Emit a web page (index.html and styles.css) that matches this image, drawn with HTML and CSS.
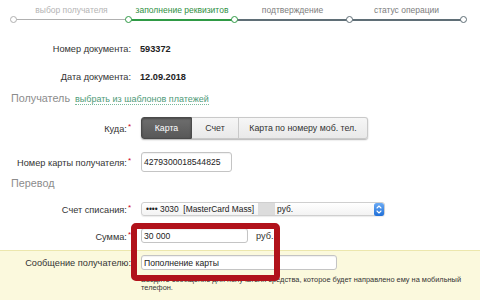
FILE: index.html
```html
<!DOCTYPE html>
<html lang="ru">
<head>
<meta charset="utf-8">
<link rel="stylesheet" href="styles.css">
</head>
<body>
<div class="page">
  <div class="steps">
    <div class="step done">
      <div class="step-label">выбор получателя</div>
      <div class="step-line"></div>
    </div>
    <div class="step current">
      <div class="step-label">заполнение реквизитов</div>
      <div class="step-line"></div>
    </div>
    <div class="step todo">
      <div class="step-label">подтверждение</div>
      <div class="step-line"></div>
    </div>
    <div class="step todo last">
      <div class="step-label">статус операции</div>
      <div class="step-line"></div>
    </div>
  </div>

  <div class="row row-doc first">
    <div class="label">Номер документа:</div>
    <div class="field value">593372</div>
  </div>
  <div class="row row-doc second">
    <div class="label">Дата документа:</div>
    <div class="field value">12.09.2018</div>
  </div>

  <div class="section section-recipient">
    <span class="section-title">Получатель</span>
    <span class="section-link">выбрать из шаблонов платежей</span>
  </div>

  <div class="row row-where">
    <div class="label">Куда:<span class="req">*</span></div>
    <div class="field">
      <div class="segmented">
        <span class="seg active">Карта</span>
        <span class="seg seg-acc">Счет</span>
        <span class="seg seg-phone">Карта по номеру моб. тел.</span>
      </div>
    </div>
  </div>

  <div class="row row-card">
    <div class="label">Номер карты получателя:<span class="req">*</span></div>
    <div class="field">
      <div class="input input-card">4279300018544825</div>
    </div>
  </div>

  <div class="section section-transfer">
    <span class="section-title">Перевод</span>
  </div>

  <div class="row row-account">
    <div class="label">Счет списания:<span class="req">*</span></div>
    <div class="field">
      <div class="select">
        <span class="select-text">•••• 3030&nbsp; [MasterCard Mass]</span>
        <span class="select-hidden"></span>
        <span class="select-cur">руб.</span>
        <span class="select-arrows">
          <svg width="10" height="13" viewBox="0 0 10 13">
            <defs>
              <linearGradient id="bg" x1="0" y1="0" x2="0" y2="1">
                <stop offset="0" stop-color="#6aaaf5"/>
                <stop offset="1" stop-color="#1f6fd8"/>
              </linearGradient>
            </defs>
            <rect x="0" y="0" width="10" height="13" rx="2.5" fill="url(#bg)"/>
            <path d="M3 5 L5 3 L7 5" fill="none" stroke="#fff" stroke-width="1.1" stroke-linecap="round" stroke-linejoin="round"/>
            <path d="M3 8 L5 10 L7 8" fill="none" stroke="#fff" stroke-width="1.1" stroke-linecap="round" stroke-linejoin="round"/>
          </svg>
        </span>
      </div>
    </div>
  </div>

  <div class="row row-sum">
    <div class="label">Сумма:<span class="req">*</span></div>
    <div class="field field-inline">
      <div class="input input-sum">30 000</div>
      <span class="unit">руб.</span>
    </div>
  </div>

  <div class="band">
    <div class="row row-message">
      <div class="label">Сообщение получателю:</div>
      <div class="field">
        <div class="input input-message">Пополнение карты</div>
      </div>
    </div>
    <div class="help">Введите сообщение для получателя средства, которое будет направлено ему на мобильный телефон.</div>
  </div>

  <div class="highlight"></div>
</div>
</body>
</html>
```

FILE: styles.css
```css
html, body {
  margin: 0;
  padding: 0;
  background: #ffffff;
}

body {
  font-family: "Liberation Sans", Arial, sans-serif;
  font-size: 9.2px;
  color: #333333;
  width: 480px;
  height: 300px;
  overflow: hidden;
}

.page {
  position: relative;
  width: 480px;
  height: 300px;
}

/* ---------- steps ---------- */
.steps {
  display: grid;
  grid-template-columns: 115px 106px 115px 113px;
  margin-left: 14px;
  padding-top: 4px;
}

.step-label {
  height: 12px;
  line-height: 12px;
  font-size: 8.5px;
  text-align: center;
  white-space: nowrap;
}

.step-line {
  position: relative;
  margin-top: 3px;
  height: 0;
  border-top: 2px solid #5f6e76;
}

.step-line::before {
  content: "";
  position: absolute;
  left: -4px;
  top: -5px;
  width: 5px;
  height: 5px;
  border-radius: 50%;
  border: 1.5px solid #5f6e76;
  background: #ffffff;
  z-index: 1;
}

.step.last .step-line::after {
  content: "";
  position: absolute;
  right: -4px;
  top: -5px;
  width: 5px;
  height: 5px;
  border-radius: 50%;
  border: 1.5px solid #5f6e76;
  background: #ffffff;
  z-index: 1;
}

.step.done .step-label { color: #b4b4b4; }
.step.done .step-line { border-top: 1.5px solid #b0b0b0; }
.step.done .step-line::before { border-color: #b0b0b0; top: -4.5px; }

.step.current .step-label { color: #2f8f3f; }
.step.current .step-line { border-top-color: #2f9a45; }
.step.current .step-line::before { border-color: #2f9a45; }

.step.todo .step-label { color: #7d7d7d; }
.step.todo .step-line::before { border-color: #2f9a45; }
.step.todo.last .step-line::before { border-color: #5f6e76; }

/* ---------- rows ---------- */
.row {
  display: flex;
  align-items: center;
}

.label {
  width: 131px;
  flex: 0 0 131px;
  text-align: right;
  white-space: nowrap;
  color: #333333;
}

.req {
  color: #d0021b;
  font-size: 8px;
  vertical-align: 3px;
  margin-left: 1px;
}

.field {
  margin-left: 10px;
  display: flex;
  align-items: center;
}

.value {
  font-weight: bold;
  color: #222222;
  margin-left: 9px;
}

.row-doc { height: 16px; }
.row-doc.first { margin-top: 20px; }
.row-doc.second { margin-top: 12px; }

/* ---------- sections ---------- */
.section {
  display: flex;
  align-items: baseline;
  gap: 5px;
  padding-left: 11px;
  height: 14px;
}

.section-title {
  font-size: 10.8px;
  color: #8c8c8c;
}

.section-link {
  font-size: 9px;
  color: #4e9a77;
  border-bottom: 1px dotted #7ab89a;
  line-height: 10px;
}

.section-recipient { margin-top: 7px; }
.section-transfer { margin-top: 5px; }

/* ---------- segmented ---------- */
.row-where { margin-top: 11px; height: 22px; }

.segmented {
  display: flex;
  height: 22px;
  border-radius: 3px;
  box-shadow: 0 1px 1.5px rgba(0, 0, 0, 0.3);
}

.seg {
  display: flex;
  align-items: center;
  justify-content: center;
  height: 20px;
  border: 1px solid #c9c9c9;
  border-left: none;
  background: linear-gradient(#f6f6f6, #e9e9e9);
  color: #333333;
  font-size: 8.8px;
}

.seg.active {
  width: 49px;
  border: 1px solid #4a4a4a;
  border-radius: 3px 0 0 3px;
  background: linear-gradient(#6e6e6e, #585858);
  color: #ffffff;
  box-shadow: inset 0 1px 2px rgba(0, 0, 0, 0.35);
}

.seg-acc { width: 46px; }
.seg-phone { width: 128px; border-radius: 0 3px 3px 0; }

/* ---------- inputs ---------- */
.input {
  box-sizing: border-box;
  border: 1px solid #c4c4c4;
  border-radius: 3px;
  background: #ffffff;
  padding-left: 2px;
  font-size: 8.6px;
  color: #222222;
  display: flex;
  align-items: center;
  box-shadow: inset 0 1px 1px rgba(0, 0, 0, 0.06);
}

.row-card { margin-top: 13px; height: 20px; }
.input-card { width: 91px; height: 20px; }

.row-account { margin-top: 11px; height: 14px; }

.select {
  box-sizing: border-box;
  width: 244px;
  height: 14px;
  border: 1px solid #cfcfcf;
  border-radius: 3px;
  background: linear-gradient(#ffffff, #f3f3f3);
  display: flex;
  align-items: center;
  padding-left: 4px;
  font-size: 8.4px;
  color: #222222;
  box-shadow: 0 1px 1px rgba(0, 0, 0, 0.08);
}

.select-text { white-space: nowrap; }

.select-hidden {
  width: 17px;
  height: 12px;
  margin-left: 4px;
  background: #dcdcdc;
}

.select-cur { margin-left: 2px; }

.select-arrows {
  margin-left: auto;
  margin-right: 0;
  display: flex;
}

.row-sum { margin-top: 12px; height: 15px; }
.input-sum { width: 107px; height: 15px; }
.unit { margin-left: 8px; font-size: 9.2px; }

/* ---------- band ---------- */
.band {
  margin-top: 7px;
  background: #fbf9dd;
  border-top: 1px solid #ece7ad;
  padding-top: 4px;
  height: 47px;
}

.row-message { height: 15px; }
.input-message { width: 196px; height: 15px; }

.help {
  margin-left: 141px;
  margin-top: 6px;
  font-size: 7.4px;
  line-height: 8px;
  color: #333333;
  width: 325px;
}

/* ---------- red highlight ---------- */
.highlight {
  position: absolute;
  left: 131px;
  top: 223px;
  width: 137px;
  height: 46px;
  border: 6px solid #b1121b;
  border-radius: 5px;
  pointer-events: none;
}
```
